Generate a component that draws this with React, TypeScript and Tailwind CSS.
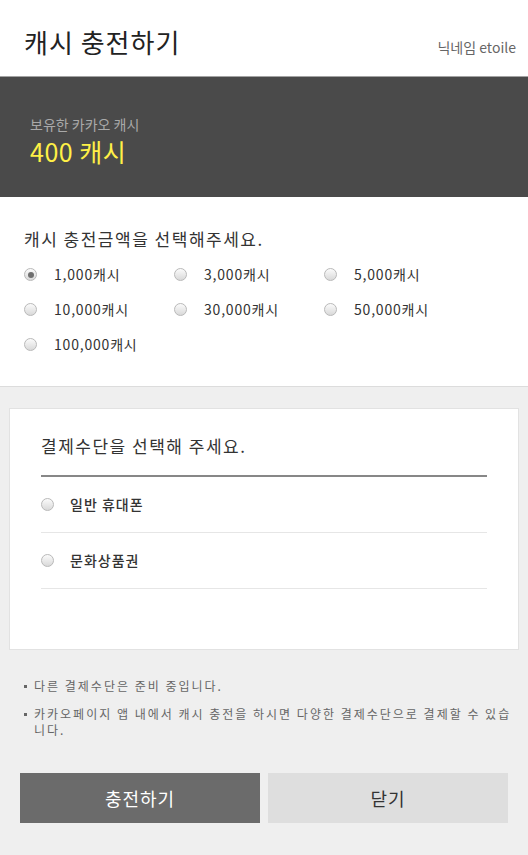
import { useState } from "react"

const amounts = ["1,000", "3,000", "5,000", "10,000", "30,000", "50,000", "100,000"]
const methods = ["일반 휴대폰", "문화상품권"]

function Radio({ checked }: { checked?: boolean }) {
  return (
    <span className="flex h-[13px] w-[13px] shrink-0 items-center justify-center rounded-full border border-[#b9b9b9] bg-gradient-to-b from-[#fbfbfb] to-[#d9d9d9]">
      {checked ? <span className="h-[6px] w-[6px] rounded-full bg-[#6f6f6f]" /> : null}
    </span>
  )
}

export default function App() {
  const [amount, setAmount] = useState("1,000")
  const [method, setMethod] = useState<string | null>(null)

  return (
    <div
      className="min-h-[855px] bg-[#efefef] text-[#333]"
      style={{ fontFamily: '"Noto Sans CJK KR", "Noto Sans", sans-serif' }}
    >
      <header className="flex h-[76px] items-baseline justify-between bg-white pl-6 pr-3 pt-[26px]">
        <h1 className="text-[26px] font-normal leading-[32px] tracking-[1px] text-[#222]">캐시 충전하기</h1>
        <span className="text-[14px] text-[#666]">닉네임 etoile</span>
      </header>

      <section className="h-[121px] border-t border-[#a3a3a3] bg-[#4a4a4a] px-[30px] pt-[37px]">
        <p className="text-[14px] leading-[20px] text-[#a9a9a9]">보유한 카카오 캐시</p>
        <p className="mt-[1px] text-[25px] leading-[32px] tracking-[0.5px] text-[#fff046]">400 캐시</p>
      </section>

      <section className="h-[190px] border-b border-[#dcdcdc] bg-white px-6 pt-[30px]">
        <h2 className="text-[17px] leading-[24px] tracking-[1.5px] text-[#333]">캐시 충전금액을 선택해주세요.</h2>
        <div className="mt-[13px] grid w-[450px] grid-cols-3 gap-y-[14px]">
          {amounts.map((a) => (
            <button
              key={a}
              type="button"
              onClick={() => setAmount(a)}
              className="flex h-[21px] items-center gap-[17px] text-left text-[14px] tracking-[0.8px] text-[#333]"
            >
              <Radio checked={amount === a} />
              <span>{a}캐시</span>
            </button>
          ))}
        </div>
      </section>

      <div className="px-[9px] pt-[21px]">
        <div className="h-[242px] border border-[#e2e2e2] bg-white px-[31px] pt-[25px]">
          <h2 className="border-b-2 border-[#878787] pb-[17px] text-[17px] leading-[24px] tracking-[1.5px] text-[#333]">
            결제수단을 선택해 주세요.
          </h2>
          {methods.map((m) => (
            <button
              key={m}
              type="button"
              onClick={() => setMethod(m)}
              className="flex h-[56px] w-full items-center gap-[16px] border-b border-[#e6e6e6] text-left text-[14px] font-medium tracking-[1px] text-[#333]"
            >
              <Radio checked={method === m} />
              <span>{m}</span>
            </button>
          ))}
        </div>
      </div>

      <ul className="mt-[28px] space-y-[12px] pl-[24px] pr-[16px] text-[12px] leading-[16px] tracking-[2px] text-[#666]">
        <li className="flex gap-[7px]">
          <span className="mt-[7px] h-[3px] w-[3px] shrink-0 bg-[#666]" />
          <span>다른 결제수단은 준비 중입니다.</span>
        </li>
        <li className="flex gap-[7px]">
          <span className="mt-[7px] h-[3px] w-[3px] shrink-0 bg-[#666]" />
          <span>카카오페이지 앱 내에서 캐시 충전을 하시면 다양한 결제수단으로 결제할 수 있습니다.</span>
        </li>
      </ul>

      <div className="mt-[35px] grid grid-cols-2 gap-2 px-5">
        <button type="button" className="h-[50px] bg-[#6b6b6b] text-[18px] tracking-[1px] text-white">
          충전하기
        </button>
        <button type="button" className="h-[50px] bg-[#dedede] text-[18px] tracking-[1px] text-[#333]">
          닫기
        </button>
      </div>
    </div>
  )
}
